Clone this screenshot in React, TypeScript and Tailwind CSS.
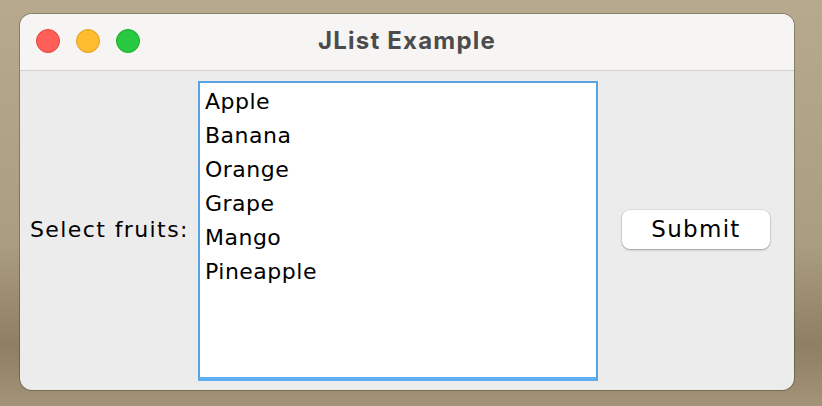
import React from "react";

const fruits = ["Apple", "Banana", "Orange", "Grape", "Mango", "Pineapple"];

export default function App() {
  return (
    <div
      className="w-[822px] h-[406px] overflow-hidden pl-[20px] pt-[14px]"
      style={{
        background:
          "linear-gradient(180deg, #b6a98e 0%, #ab9d80 60%, #8f7f62 85%, #a39477 100%)",
      }}
    >
      <div className="w-[774px] h-[376px] rounded-[12px] overflow-hidden bg-[#ececec] flex flex-col shadow-[0_0_0_1px_rgba(0,0,0,0.25)]">
        <div className="h-[57px] shrink-0 bg-[#f6f5f4] border-b border-[#d2d2d2] flex items-center relative">
          <div className="flex items-center gap-[16px] pl-[16px] -mt-[2px]">
            <div className="w-[24px] h-[24px] rounded-full bg-[#ff5f57] border border-[#e0443e]" />
            <div className="w-[24px] h-[24px] rounded-full bg-[#febc2e] border border-[#dea123]" />
            <div className="w-[24px] h-[24px] rounded-full bg-[#28c840] border border-[#1aab29]" />
          </div>
          <div className="absolute inset-0 flex items-center justify-center pointer-events-none -mt-[2px]">
            <span className="text-[24px] font-bold text-[#4c4c4c] font-['Inter',sans-serif] tracking-[1.2px]">
              JList Example
            </span>
          </div>
        </div>
        <div className="flex-1 flex items-center pl-[10px] font-['DejaVu_Sans',sans-serif] text-black">
          <span className="text-[22px] w-[168px] leading-none tracking-[1.4px] -mt-[2px] whitespace-nowrap">Select fruits:</span>
          <div className="w-[400px] h-[300px] bg-white border-2 border-b-4 border-[#5aa3e3] border-b-[#5fb0f2] pt-[4px] pl-[5px]">
            {fruits.map((f) => (
              <div key={f} className="h-[34px] text-[22px] leading-[30px] tracking-[0.5px]">
                {f}
              </div>
            ))}
          </div>
          <button className="ml-[24px] w-[148px] h-[39px] bg-white rounded-[8px] shadow-[0_1px_2px_rgba(0,0,0,0.3),0_0_0_0.5px_rgba(0,0,0,0.12)] text-[23px] tracking-[1.3px] text-black -mt-[3px]">
            Submit
          </button>
        </div>
      </div>
    </div>
  );
}
